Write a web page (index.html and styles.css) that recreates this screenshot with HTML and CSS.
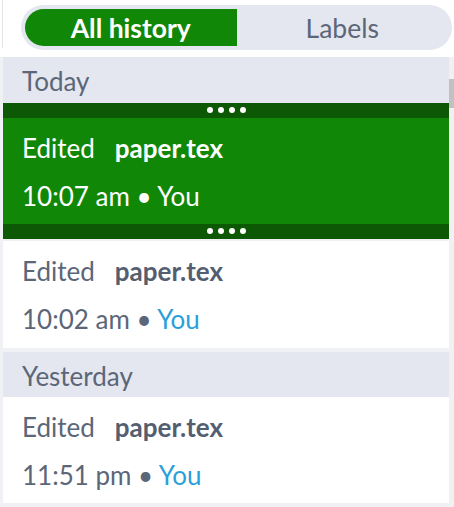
FILE: index.html
```html
<!DOCTYPE html>
<html>
<head>
<meta charset="utf-8">
<link rel="stylesheet" href="styles.css">
</head>
<body>
<div class="app">
  <div class="top">
    <div class="top-line"></div>
    <div class="toggle">
      <div class="seg seg-active">All history</div>
      <div class="seg">Labels</div>
    </div>
  </div>
  <div class="panel">
    <div class="list">
      <div class="day">Today</div>
      <div class="entry selected">
        <div class="handle"><span class="dot"></span><span class="dot"></span><span class="dot"></span><span class="dot"></span></div>
        <div class="entry-body">
          <div class="line"><span class="action">Edited</span><span class="file">paper.tex</span></div>
          <div class="line">10:07 am <span class="sep">•</span> <span class="who">You</span></div>
        </div>
        <div class="handle"><span class="dot"></span><span class="dot"></span><span class="dot"></span><span class="dot"></span></div>
      </div>
      <div class="entry after-selected">
        <div class="entry-body">
          <div class="line"><span class="action">Edited</span><span class="file">paper.tex</span></div>
          <div class="line">10:02 am <span class="sep">•</span> <span class="who">You</span></div>
        </div>
      </div>
      <div class="day day-gap">Yesterday</div>
      <div class="entry">
        <div class="entry-body">
          <div class="line"><span class="action">Edited</span><span class="file">paper.tex</span></div>
          <div class="line">11:51 pm <span class="sep">•</span> <span class="who">You</span></div>
        </div>
      </div>
    </div>
    <div class="scrollbar"><div class="thumb"></div></div>
  </div>
</div>
</body>
</html>
```
FILE: styles.css
```css
* { box-sizing: border-box; }
html, body { margin: 0; padding: 0; background: #ffffff; }
body {
  font-family: Lato, "Noto Sans", sans-serif;
  width: 454px;
  height: 507px;
  overflow: hidden;
}
.app { display: flex; flex-direction: column; height: 507px; }
.top {
  display: flex;
  align-items: flex-start;
  height: 57px;
  flex: none;
}
.top-line {
  width: 1px;
  height: 48px;
  margin-left: 2px;
  background: #e3e5ea;
}
.toggle {
  margin-left: 18px;
  margin-top: 5px;
  width: 431px;
  height: 45px;
  border-radius: 23px;
  background: #e4e7ef;
  padding: 4px;
  display: flex;
}
.seg {
  flex: 1;
  display: flex;
  align-items: center;
  justify-content: center;
  font-size: 26.5px;
  color: #5b6678;
}
.seg-active {
  background: #118708;
  color: #ffffff;
  font-weight: 700;
  border-radius: 19px 0 0 19px;
}
.panel {
  flex: 1;
  display: flex;
  background: #eff1f5;
  padding-left: 3px;
  min-height: 0;
}
.list {
  flex: 1;
  display: flex;
  flex-direction: column;
  min-width: 0;
}
.day {
  height: 46px;
  flex: none;
  background: #e4e7ef;
  color: #5b6678;
  font-size: 26px;
  padding-left: 19px;
  display: flex;
  align-items: center;
  padding-top: 2px;
}
.day-gap { margin-top: 4px; height: 45px; }
.entry {
  flex: none;
  background: #ffffff;
  color: #5b6678;
}
.entry-body {
  padding: 14px 0 11px 19px;
  height: 106px;
  display: flex;
  flex-direction: column;
  gap: 15px;
}
.after-selected { margin-top: 2px; height: 107px; }
.line {
  font-size: 26px;
  line-height: 33px;
  height: 33px;
  white-space: nowrap;
}
.action { margin-right: 20px; }
.file { font-weight: 700; color: #535e71; }
.who { color: #2b9fd9; }
.selected { background: #118708; color: #ffffff; }
.selected .file { color: #ffffff; }
.selected .who { color: #ffffff; }
.handle {
  height: 15px;
  background: #0d5805;
  display: flex;
  justify-content: center;
  align-items: center;
  gap: 5px;
  padding-bottom: 1px;
}
.dot {
  width: 6px;
  height: 6px;
  border-radius: 50%;
  background: #ffffff;
}
.scrollbar {
  width: 5px;
  flex: none;
  background: #f1f1f1;
}
.thumb {
  margin-top: 22px;
  height: 29px;
  background: #c1c1c1;
}
```
